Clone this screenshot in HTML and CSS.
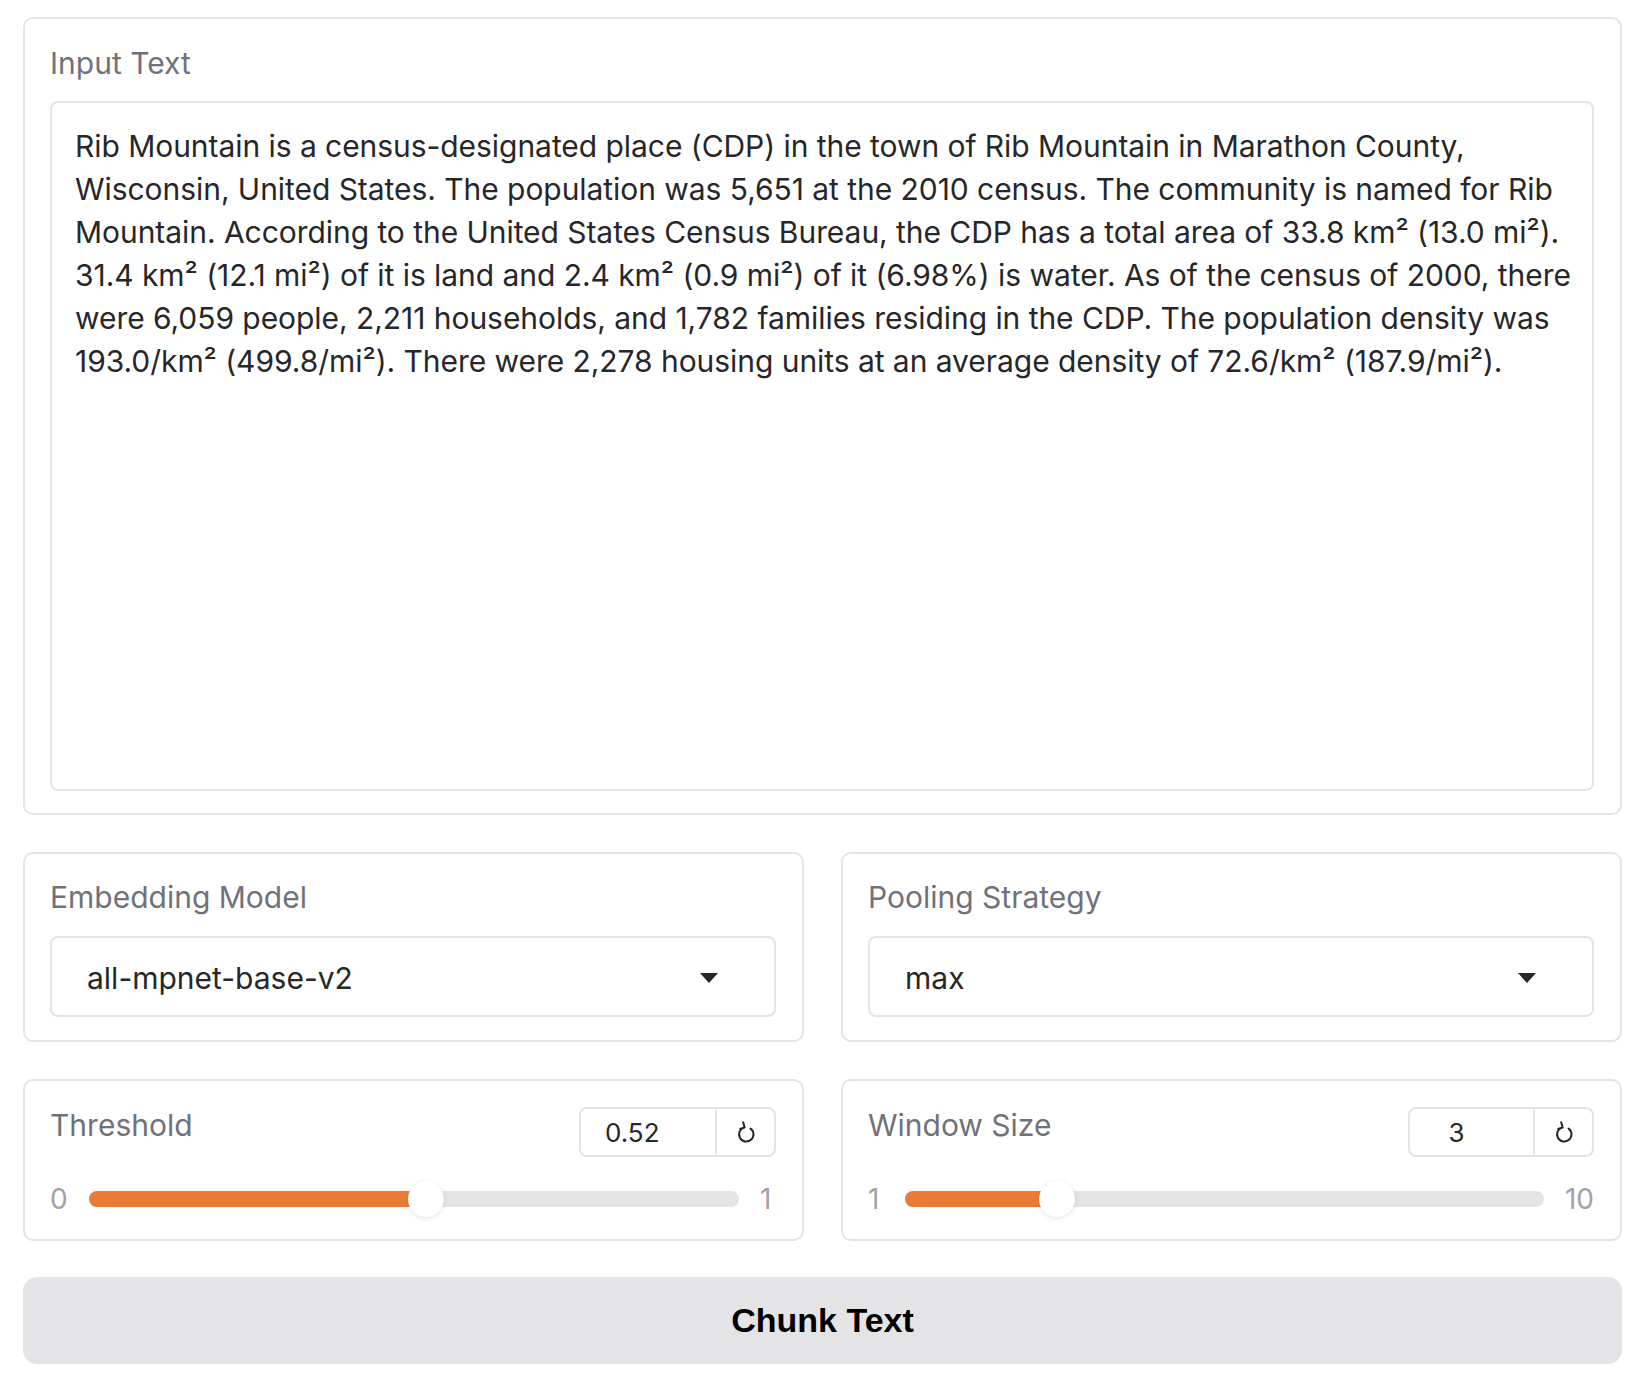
FILE: index.html
```html
<!DOCTYPE html>
<html>
<head>
<meta charset="utf-8">
<link rel="stylesheet" href="styles.css">
</head>
<body>
<div class="app">
  <div class="card card-text">
    <div class="label">Input Text</div>
    <div class="textbox">Rib Mountain is a census-designated place (CDP) in the town of Rib Mountain in Marathon County, Wisconsin, United States. The population was 5,651 at the 2010 census. The community is named for Rib Mountain. According to the United States Census Bureau, the CDP has a total area of 33.8 km² (13.0 mi²). 31.4 km² (12.1 mi²) of it is land and 2.4 km² (0.9 mi²) of it (6.98%) is water. As of the census of 2000, there were 6,059 people, 2,211 households, and 1,782 families residing in the CDP. The population density was 193.0/km² (499.8/mi²). There were 2,278 housing units at an average density of 72.6/km² (187.9/mi²).</div>
  </div>

  <div class="row">
    <div class="card card-dd">
      <div class="label">Embedding Model</div>
      <div class="dropdown">
        <span class="dd-value">all-mpnet-base-v2</span>
        <svg class="dd-arrow" width="18" height="10" viewBox="0 0 18 10"><path d="M0 0 H18 L9 10 Z" fill="#27272a"/></svg>
      </div>
    </div>
    <div class="card card-dd">
      <div class="label">Pooling Strategy</div>
      <div class="dropdown">
        <span class="dd-value">max</span>
        <svg class="dd-arrow" width="18" height="10" viewBox="0 0 18 10"><path d="M0 0 H18 L9 10 Z" fill="#27272a"/></svg>
      </div>
    </div>
  </div>

  <div class="row">
    <div class="card card-slider">
      <div class="slider-head">
        <div class="label">Threshold</div>
        <div class="numbox numbox-a">
          <div class="num">0.52</div>
          <div class="reset"><svg width="22" height="26" viewBox="0 0 22 26"><path d="M15.6 9.6 A7.2 7.2 0 1 1 9.4 8.4" fill="none" stroke="#27272a" stroke-width="2" stroke-linecap="round"/><path d="M8.2 3.2 L9.6 8.4 L5.2 10" fill="none" stroke="#27272a" stroke-width="2" stroke-linecap="round" stroke-linejoin="round"/></svg></div>
        </div>
      </div>
      <div class="slider-row">
        <span class="minmax">0</span>
        <div class="track">
          <div class="fill" style="width: calc(18px + 0.52 * (100% - 36px));"></div>
          <div class="thumb" style="left: calc(0.52 * (100% - 36px));"></div>
        </div>
        <span class="minmax">1</span>
      </div>
    </div>
    <div class="card card-slider">
      <div class="slider-head">
        <div class="label">Window Size</div>
        <div class="numbox numbox-b">
          <div class="num">3</div>
          <div class="reset"><svg width="22" height="26" viewBox="0 0 22 26"><path d="M15.6 9.6 A7.2 7.2 0 1 1 9.4 8.4" fill="none" stroke="#27272a" stroke-width="2" stroke-linecap="round"/><path d="M8.2 3.2 L9.6 8.4 L5.2 10" fill="none" stroke="#27272a" stroke-width="2" stroke-linecap="round" stroke-linejoin="round"/></svg></div>
        </div>
      </div>
      <div class="slider-row">
        <span class="minmax">1</span>
        <div class="track">
          <div class="fill" style="width: calc(18px + 0.2222 * (100% - 36px));"></div>
          <div class="thumb" style="left: calc(0.2222 * (100% - 36px));"></div>
        </div>
        <span class="minmax">10</span>
      </div>
    </div>
  </div>

  <div class="button">Chunk Text</div>
</div>
</body>
</html>
```

FILE: styles.css
```css
* { box-sizing: border-box; }
html, body { margin: 0; padding: 0; background: #ffffff; }
body {
  font-family: Inter, "Noto Sans", "Liberation Sans", sans-serif;
  color: #27272a;
}
.app {
  margin: 17px 26px 0 23px;
  display: flex;
  flex-direction: column;
  gap: 37px;
}
.card {
  border: 2px solid #e4e4e7;
  border-radius: 10px;
  background: #fff;
  padding: 26px 26px 22px 25px;
}
.label {
  font-size: 30px;
  line-height: 36px;
  color: #71717a;
}
.card-text .label { margin-bottom: 20px; }
.textbox {
  height: 690px;
  border: 2px solid #e4e4e7;
  border-radius: 8px;
  padding: 22px 4px 0 23px;
  font-size: 30px;
  line-height: 43px;
  letter-spacing: -0.05px;
  color: #27272a;
}
.row {
  display: grid;
  grid-template-columns: 1fr 1fr;
  gap: 37px;
}
.card-dd { padding-top: 25px; padding-bottom: 23px; }
.card-dd .label { margin-bottom: 21px; }
.dropdown {
  height: 81px;
  border: 2px solid #e4e4e7;
  border-radius: 8px;
  display: flex;
  align-items: center;
  justify-content: space-between;
  padding: 3px 56px 0 35px;
}
.dd-value { font-size: 30px; color: #27272a; }
.dd-arrow { display: block; }

.card-slider { padding-top: 26px; padding-bottom: 22px; }
.slider-head {
  display: flex;
  justify-content: space-between;
  align-items: flex-start;
  height: 50px;
}
.numbox {
  display: flex;
  height: 50px;
  border: 2px solid #e4e4e7;
  border-radius: 8px;
}
.num {
  font-size: 26px;
  line-height: 48px;
  padding-left: 24px;
  color: #27272a;
}
.numbox-a .num { width: 134px; }
.numbox-b .num { width: 123px; text-align: center; padding-left: 0; padding-right: 30px; }
.reset {
  border-left: 2px solid #e4e4e7;
  width: 59px;
  display: flex;
  align-items: center;
  justify-content: center;
}
.reset svg { display: block; }
.slider-row {
  display: flex;
  align-items: center;
  gap: 21px;
  margin-top: 24px;
  height: 36px;
}
.minmax {
  font-size: 28px;
  color: #a1a1aa;
  min-width: 16px;
}
.track {
  position: relative;
  flex: 1;
  height: 16px;
  border-radius: 8px;
  background: #e4e4e7;
}
.fill {
  height: 16px;
  border-radius: 8px;
  background: #ea7b37;
}
.thumb {
  position: absolute;
  top: -10px;
  width: 36px;
  height: 36px;
  border-radius: 50%;
  background: #fff;
  box-shadow: 0 1px 5px rgba(0,0,0,0.12);
}
.button {
  margin-top: -1px;
  height: 87px;
  border-radius: 14px;
  background: #e4e4e7;
  display: flex;
  align-items: center;
  justify-content: center;
  font-family: "Liberation Sans", Arial, sans-serif;
  font-weight: bold;
  font-size: 34px;
  color: #000;
}
```
